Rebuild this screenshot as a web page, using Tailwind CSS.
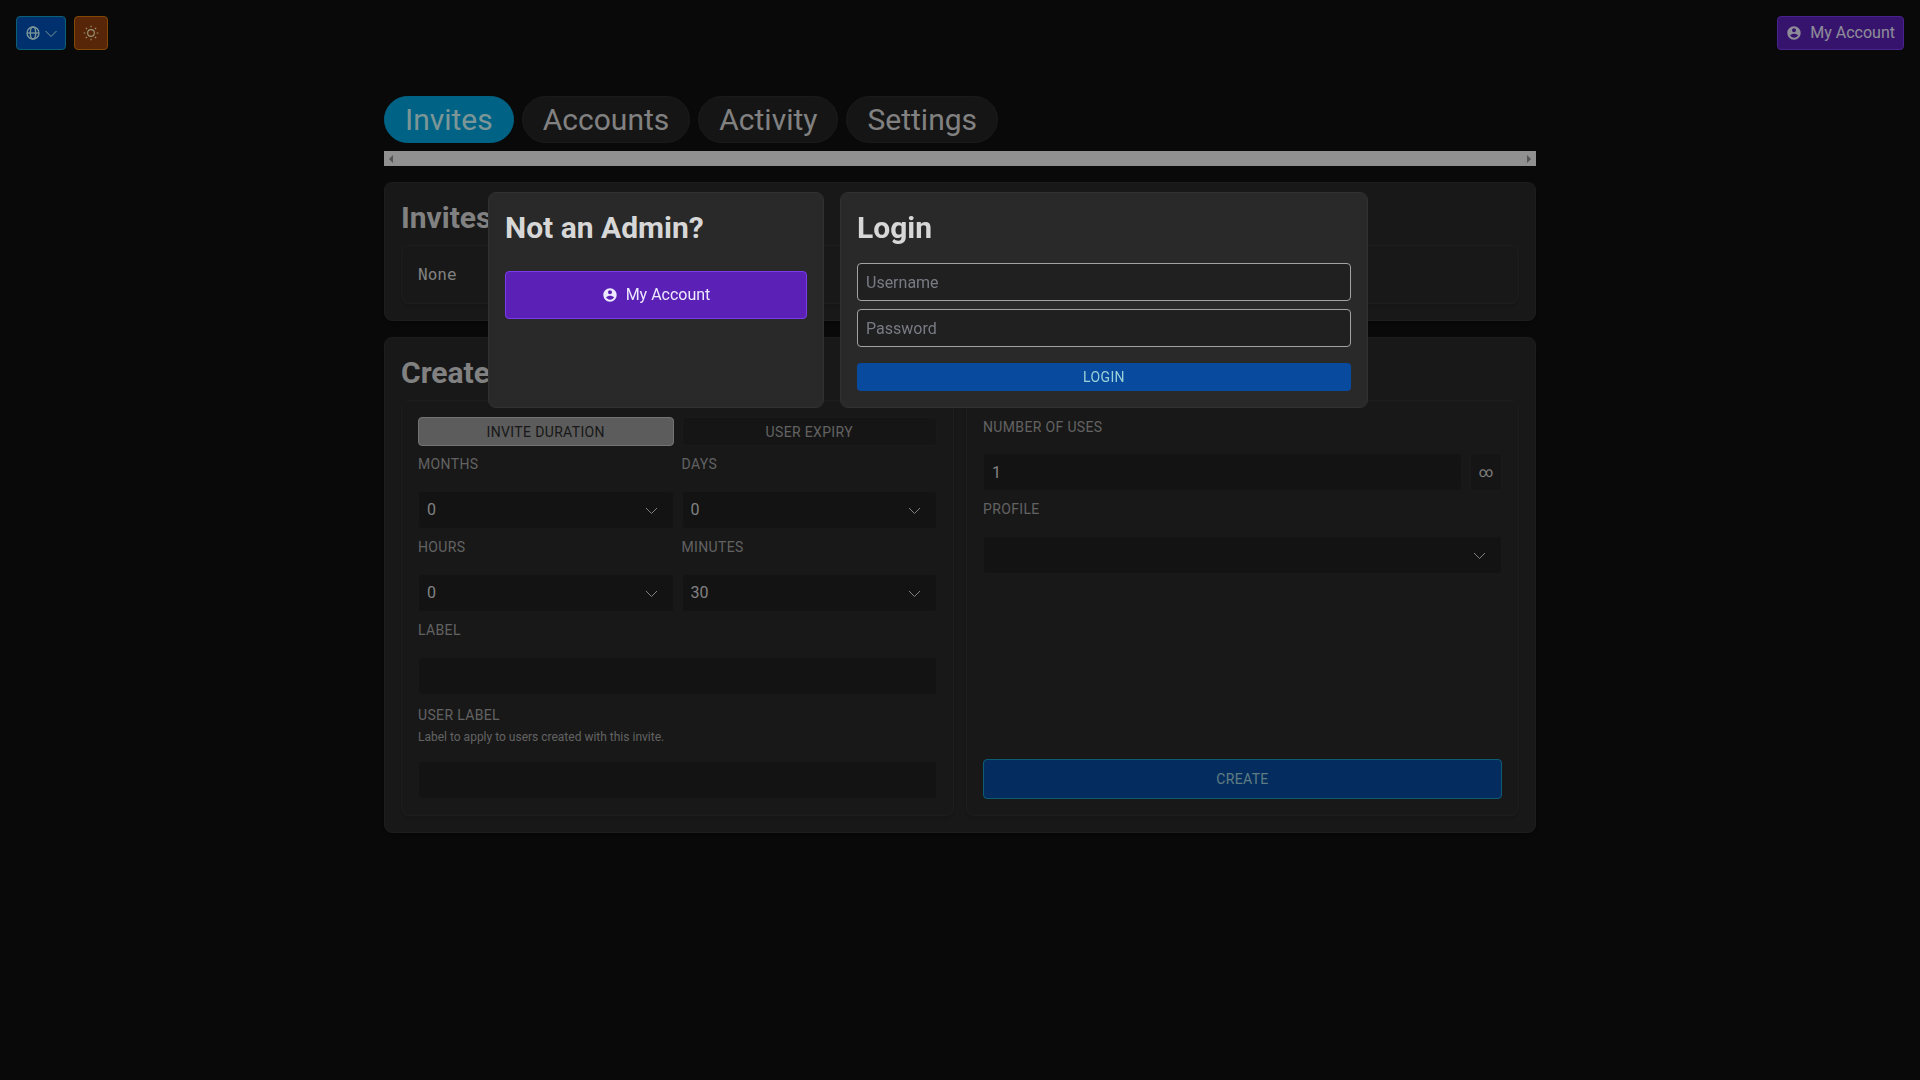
<!DOCTYPE html>
<html lang="en">
<head>
  <meta charset="UTF-8" />
  <meta name="viewport" content="width=device-width, initial-scale=1.0"/>
  <title>Admin - Invites</title>
  <!-- Tailwind CSS -->
  <script src="https://cdn.jsdelivr.net/npm/@tailwindcss/browser@4"></script>
</head>
<body class="min-h-screen bg-[#101010] font-[Roboto,sans-serif] text-base text-[#d7d7d7]">

  <!-- Top bar -->
  <header class="flex items-start justify-between p-4">
    <div class="flex gap-2">
      <button type="button" aria-label="Language" class="flex h-[34px] w-[50px] items-center justify-center gap-1 rounded border border-[#10a0c4] bg-[#0050b8] text-[#cffafe]">
        <svg class="size-4" viewBox="0 0 24 24" fill="none" stroke="currentColor" stroke-width="2">
          <circle cx="12" cy="12" r="9"/>
          <ellipse cx="12" cy="12" rx="4" ry="9"/>
          <path d="M3 12h18"/>
        </svg>
        <svg class="h-4 w-3" viewBox="0 0 12 16" fill="none" stroke="currentColor"><path d="M.5 6l5.500 5.500L11.500 6"/></svg>
      </button>
      <button type="button" aria-label="Theme" class="flex size-[34px] items-center justify-center rounded border border-[#d97706] bg-[#92400e] text-[#fef3c7]">
        <svg class="size-4" viewBox="0 0 24 24" fill="none" stroke="currentColor" stroke-width="1.700">
          <circle cx="12" cy="12" r="5"/>
          <path d="M12 1v2.500M12 20.500v2.500M1 12h2.500M20.500 12h2.500M4.200 4.200l1.800 1.800M18 18l1.800 1.800M4.200 19.800l1.800-1.800M18 6l1.800-1.800"/>
        </svg>
      </button>
    </div>
    <a href="#" class="flex h-[34px] items-center gap-2 rounded border border-[#7c3aed] bg-[#5b21b6] px-2 text-[#ede9fe]">
      <svg class="size-4" viewBox="0 0 24 24" fill="currentColor"><path d="M12 2C17.520 2 22 6.480 22 12C22 17.520 17.520 22 12 22C6.480 22 2 17.520 2 12C2 6.480 6.480 2 12 2ZM6.020 15.420C7.490 17.610 9.700 19 12.160 19C14.620 19 16.830 17.610 18.300 15.420C16.690 13.920 14.530 13 12.160 13C9.790 13 7.630 13.920 6.020 15.420ZM12 11C13.660 11 15 9.660 15 8C15 6.340 13.660 5 12 5C10.340 5 9 6.340 9 8C9 9.660 10.340 11 12 11Z"/></svg>
      My Account
    </a>
  </header>

  <main class="mx-auto mt-[30px] max-w-6xl">
    <!-- Tabs -->
    <nav class="flex gap-2 text-3xl">
      <button type="button" class="h-[47px] rounded-full border border-[#00a4dc] bg-[#00a4dc] px-5 text-[#cffafe]">Invites</button>
      <button type="button" class="h-[47px] rounded-full border border-[#2c2c2c] bg-[#242424] px-5">Accounts</button>
      <button type="button" class="h-[47px] rounded-full border border-[#2c2c2c] bg-[#242424] px-5">Activity</button>
      <button type="button" class="h-[47px] rounded-full border border-[#2c2c2c] bg-[#242424] px-5">Settings</button>
    </nav>
    <!-- Tab scroller -->
    <div class="mt-2 flex h-[15px] items-center justify-between bg-[#f1f1f1] px-[5px] text-[#8b8b8b]">
      <svg class="h-2 w-1" viewBox="0 0 4 8" fill="currentColor"><path d="M4 0v8L0 4z"/></svg>
      <svg class="h-2 w-1" viewBox="0 0 4 8" fill="currentColor"><path d="M0 0v8l4-4z"/></svg>
    </div>

    <!-- Invites -->
    <section class="mt-4 rounded-lg border border-[#313131] bg-[#292929] p-4 shadow-lg">
      <h2 class="text-3xl leading-[38px] font-bold">Invites</h2>
      <div class="mt-2 rounded-lg border border-[#313131] p-4 shadow-md">
        <p class="font-['DejaVu_Sans_Mono',monospace] leading-[25px]">None</p>
      </div>
    </section>

    <!-- Create -->
    <section class="mt-4 rounded-lg border border-[#313131] bg-[#292929] p-4 shadow-lg">
      <h2 class="text-3xl leading-[38px] font-bold">Create</h2>
      <form class="mt-2 grid grid-cols-2 gap-3">
        <div class="rounded-lg border border-[#313131] p-4 shadow-md">
          <div class="grid grid-cols-2 gap-2 text-sm tracking-wide">
            <button type="button" class="h-[29px] rounded border border-[#c0c0c0] bg-[#9a9a9a] text-[#292929]">INVITE DURATION</button>
            <button type="button" class="h-[29px] rounded border border-[#2c2c2c] bg-[#242424] text-[#a3a3a3]">USER EXPIRY</button>
          </div>
          <div class="mt-2 grid grid-cols-2 gap-2">
            <div>
              <label for="months" class="block text-sm tracking-wide text-[#a3a3a3]">MONTHS</label>
              <div class="relative mt-[17px]">
                <select id="months" class="h-[38px] w-full appearance-none rounded border border-[#282828] bg-[#202020] px-2"><option>0</option></select>
                <svg class="pointer-events-none absolute top-3 right-4 h-4 w-3" viewBox="0 0 12 16" fill="none" stroke="currentColor"><path d="M0 5l5.500 5.500L11 5"/></svg>
              </div>
            </div>
            <div>
              <label for="days" class="block text-sm tracking-wide text-[#a3a3a3]">DAYS</label>
              <div class="relative mt-[17px]">
                <select id="days" class="h-[38px] w-full appearance-none rounded border border-[#282828] bg-[#202020] px-2"><option>0</option></select>
                <svg class="pointer-events-none absolute top-3 right-4 h-4 w-3" viewBox="0 0 12 16" fill="none" stroke="currentColor"><path d="M0 5l5.500 5.500L11 5"/></svg>
              </div>
            </div>
            <div>
              <label for="hours" class="block text-sm tracking-wide text-[#a3a3a3]">HOURS</label>
              <div class="relative mt-[17px]">
                <select id="hours" class="h-[38px] w-full appearance-none rounded border border-[#282828] bg-[#202020] px-2"><option>0</option></select>
                <svg class="pointer-events-none absolute top-3 right-4 h-4 w-3" viewBox="0 0 12 16" fill="none" stroke="currentColor"><path d="M0 5l5.500 5.500L11 5"/></svg>
              </div>
            </div>
            <div>
              <label for="minutes" class="block text-sm tracking-wide text-[#a3a3a3]">MINUTES</label>
              <div class="relative mt-[17px]">
                <select id="minutes" class="h-[38px] w-full appearance-none rounded border border-[#282828] bg-[#202020] px-2"><option>30</option></select>
                <svg class="pointer-events-none absolute top-3 right-4 h-4 w-3" viewBox="0 0 12 16" fill="none" stroke="currentColor"><path d="M0 5l5.500 5.500L11 5"/></svg>
              </div>
            </div>
          </div>
          <label for="label" class="mt-2 block text-sm tracking-wide text-[#a3a3a3]">LABEL</label>
          <input id="label" type="text" class="mt-[17px] block h-[38px] w-full rounded border border-[#282828] bg-[#202020] px-2" />
          <label for="user-label" class="mt-[10px] block text-sm tracking-wide text-[#a3a3a3]">USER LABEL</label>
          <p class="mt-1 text-xs text-[#a3a3a3]">Label to apply to users created with this invite.</p>
          <input id="user-label" type="text" class="mt-4 block h-[38px] w-full rounded border border-[#282828] bg-[#202020] px-2" />
        </div>

        <div class="flex flex-col rounded-lg border border-[#313131] p-4 shadow-md">
          <label for="uses" class="block text-sm tracking-wide text-[#a3a3a3]">NUMBER OF USES</label>
          <div class="mt-4 flex gap-2">
            <input id="uses" type="text" value="1" class="h-[38px] min-w-0 flex-1 rounded border border-[#282828] bg-[#202020] px-2" />
            <button type="button" aria-label="Unlimited uses" class="h-[38px] w-8 rounded border border-[#2c2c2c] bg-[#242424] text-sm">∞</button>
          </div>
          <label for="profile" class="mt-2 block text-sm tracking-wide text-[#a3a3a3]">PROFILE</label>
          <div class="relative mt-[17px]">
            <select id="profile" class="h-[38px] w-full appearance-none rounded border border-[#282828] bg-[#202020] px-2"><option></option></select>
            <svg class="pointer-events-none absolute top-3 right-4 h-4 w-3" viewBox="0 0 12 16" fill="none" stroke="currentColor"><path d="M0 5l5.500 5.500L11 5"/></svg>
          </div>
          <button type="submit" class="mt-auto h-10 rounded border border-[#159abf] bg-[#084a9e] text-sm tracking-wide text-[#9cd0d8]">CREATE</button>
        </div>
      </form>
    </section>
  </main>

  <!-- Login modal -->
  <div class="fixed inset-0 flex items-start justify-center bg-black/40 pt-48 pr-16">
    <div class="flex w-full max-w-[880px] gap-4">
      <section class="w-[336px] rounded-lg border border-[#313131] bg-[#292929] p-4">
        <h2 class="text-3xl leading-[38px] font-bold">Not an Admin?</h2>
        <a href="#" class="mt-6 flex h-12 items-center justify-center gap-2 rounded border border-[#7c3aed] bg-[#5b21b6] text-[#ede9fe]">
          <svg class="size-4" viewBox="0 0 24 24" fill="currentColor"><path d="M12 2C17.520 2 22 6.480 22 12C22 17.520 17.520 22 12 22C6.480 22 2 17.520 2 12C2 6.480 6.480 2 12 2ZM6.020 15.420C7.490 17.610 9.700 19 12.160 19C14.620 19 16.830 17.610 18.300 15.420C16.690 13.920 14.530 13 12.160 13C9.790 13 7.630 13.920 6.020 15.420ZM12 11C13.660 11 15 9.660 15 8C15 6.340 13.660 5 12 5C10.340 5 9 6.340 9 8C9 9.660 10.340 11 12 11Z"/></svg>
          My Account
        </a>
      </section>
      <form class="flex-1 rounded-lg border border-[#313131] bg-[#292929] p-4">
        <h2 class="text-3xl leading-[38px] font-bold">Login</h2>
        <input type="text" aria-label="Username" placeholder="Username" class="mt-4 block h-[38px] w-full rounded border border-[#a3a3a3] bg-[#202020] px-2 placeholder:text-[#797b84]" />
        <input type="password" aria-label="Password" placeholder="Password" class="mt-2 block h-[38px] w-full rounded border border-[#a3a3a3] bg-[#202020] px-2 placeholder:text-[#797b84]" />
        <button type="submit" class="mt-4 block h-7 w-full rounded bg-[#084a9e] text-sm tracking-wide text-[#9cd0d8]">LOGIN</button>
      </form>
    </div>
  </div>
</body>
</html>
